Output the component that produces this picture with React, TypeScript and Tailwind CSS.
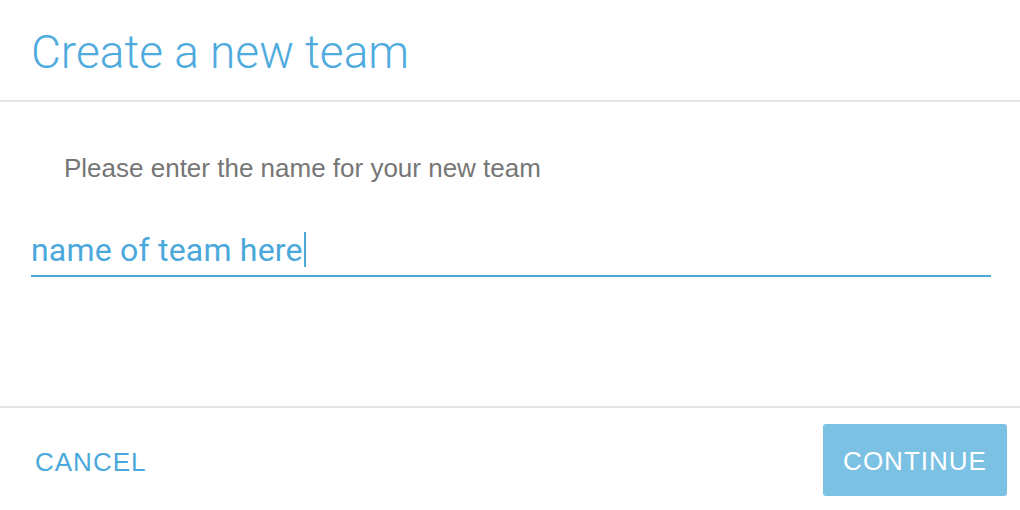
import React from 'react';

const CreateTeamDialog: React.FC = () => {
  const teamName = 'name of team here';

  return (
    <div className="flex h-[510px] w-[1020px] flex-col bg-white font-['Liberation_Sans',Arial,sans-serif]">
      <div className="h-[102px] border-b-2 border-[#e6e6e6] pl-[31px] pt-[24px]">
        <h1 className="font-['Roboto',sans-serif] text-[46px] font-light leading-[56px] text-[#4fabdd]">
          Create a new team
        </h1>
      </div>

      <div className="flex-1 pl-[31px] pr-[29px] pt-[50px]">
        <p className="pl-[33px] text-[26px] leading-[32px] text-[#767676]">
          Please enter the name for your new team
        </p>
        {/* input shown focused, with its caret */}
        <div className="mt-[44px] flex h-[49px] items-center border-b-2 border-[#4aa8db] pb-[4px]">
          <span className="font-['Roboto',sans-serif] text-[32px] leading-[40px] tracking-[0.2px] text-[#4aa8db]">{teamName}</span>
          <span className="ml-[1px] h-[35px] w-[2px] bg-[#4aa8db]" />
        </div>
      </div>

      <div className="flex h-[104px] items-center justify-between border-t-2 border-[#e6e6e6] pl-[35px] pr-[13px]">
        <button className="pt-[6px] text-[26px] font-medium uppercase tracking-[1px] text-[#4aa8db]">Cancel</button>
        <button className="mt-[2px] h-[72px] w-[184px] rounded-[3px] bg-[#7ac1e4] pt-[3px] text-[26px] uppercase tracking-[1px] text-white">
          Continue
        </button>
      </div>
    </div>
  );
};

export default function App() {
  return <CreateTeamDialog />;
}
